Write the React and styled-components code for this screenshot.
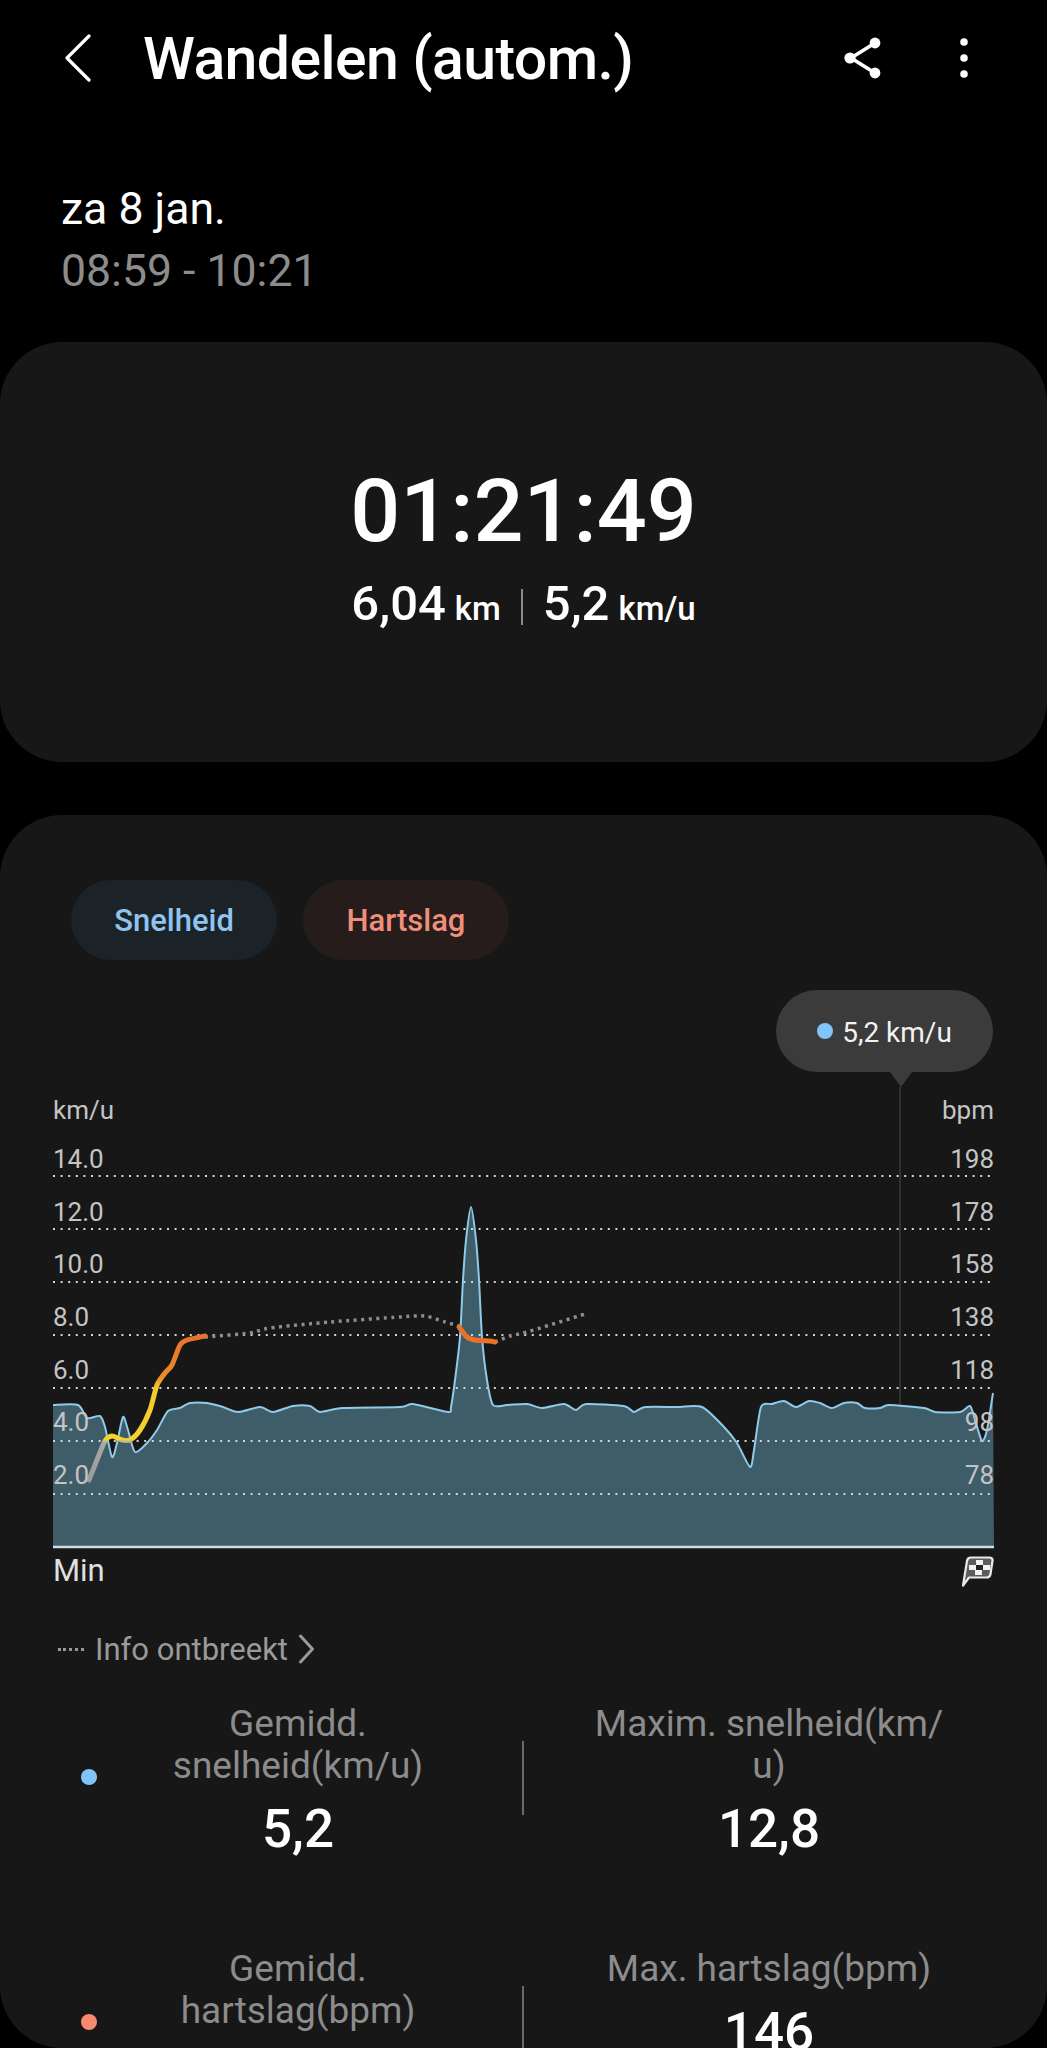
import React from 'react';
import styled, { createGlobalStyle } from 'styled-components';

const speedPts = [
  [53, 1405], [78, 1405], [87, 1418], [100, 1416], [105, 1427], [112, 1457], [117, 1443], [123, 1417], [128, 1430],
  [135, 1452], [147, 1443], [157, 1430], [168, 1411], [180, 1408], [190, 1403], [207, 1403], [223, 1407], [238, 1412],
  [260, 1407], [273, 1412], [293, 1406], [310, 1406], [320, 1412], [343, 1408], [400, 1407], [413, 1404], [448, 1412],
  [451, 1407], [455, 1380], [460, 1337], [463, 1280], [466, 1240], [471, 1207], [476, 1240], [479, 1280], [482, 1337],
  [487, 1380], [493, 1405], [507, 1405], [527, 1404], [542, 1408], [564, 1404], [576, 1410], [586, 1404], [624, 1406],
  [634, 1412], [645, 1407], [677, 1407], [702, 1407], [724, 1427], [737, 1443], [750, 1467], [754, 1450], [761, 1407],
  [772, 1404], [784, 1401], [796, 1407], [809, 1401], [820, 1403], [832, 1408], [844, 1403], [857, 1403], [865, 1408],
  [880, 1408], [889, 1405], [924, 1408], [935, 1412], [960, 1412], [970, 1406], [975, 1420], [982, 1441], [987, 1430],
  [993, 1393],
];

// chart box starts at x 53, y 1096. points are page pixels, smoothed a bit like the real line
const toPath = raw => {
  const pts = raw.map(([x, y]) => [x - 53, y - 1096]);
  let d = `M${pts[0][0]} ${pts[0][1]}`;
  for (let i = 0; i < pts.length - 1; i++) {
    const p0 = pts[i - 1] || pts[i];
    const p1 = pts[i];
    const p2 = pts[i + 1];
    const p3 = pts[i + 2] || p2;
    const c1x = p1[0] + (p2[0] - p0[0]) / 8;
    const c1y = p1[1] + (p2[1] - p0[1]) / 8;
    const c2x = p2[0] - (p3[0] - p1[0]) / 8;
    const c2y = p2[1] - (p3[1] - p1[1]) / 8;
    d += ` C${c1x} ${c1y} ${c2x} ${c2y} ${p2[0]} ${p2[1]}`;
  }
  return d;
};

const speedLine = toPath(speedPts);
const speedArea = `${speedLine} L941 451 L0 451 Z`;

const hrLive1 = toPath([[89, 1480], [97, 1460], [105, 1441], [112, 1436], [122, 1440], [130, 1440], [140, 1430], [150, 1410], [157, 1385], [165, 1373], [172, 1365], [180, 1345], [187, 1340], [205, 1336]]);
const hrGap1 = toPath([[205, 1337], [250, 1333], [270, 1328], [330, 1322], [400, 1317], [425, 1316], [445, 1322], [459, 1326]]);
const hrLive2 = toPath([[459, 1327], [467, 1337], [475, 1340], [490, 1341], [495, 1342]]);
const hrGap2 = toPath([[495, 1342], [510, 1336], [527, 1332], [585, 1314]]);

const leftAxis = ['14.0', '12.0', '10.0', '8.0', '6.0', '4.0', '2.0'];
const rightAxis = ['198', '178', '158', '138', '118', '98', '78'];

const stats = [
  { dot: '#7fc4fa', label: 'Gemidd.\nsnelheid(km/u)', value: '5,2', maxLabel: 'Maxim. snelheid(km/\nu)', maxValue: '12,8' },
  { dot: '#f58a70', label: 'Gemidd.\nhartslag(bpm)', maxLabel: 'Max. hartslag(bpm)', maxValue: '146' },
];

export default function App() {
  return (
    <Page>
      <GlobalStyle />
      <Header>
        <BackBtn>
          <svg width="26" height="48" viewBox="0 0 26 48" fill="none" stroke="#fff" strokeWidth="3.2" strokeLinecap="round" strokeLinejoin="round">
            <path d="M24 2 L2 24 L24 46" />
          </svg>
        </BackBtn>
        <Title>Wandelen (autom.)</Title>
        <HeaderIcons>
          <svg width="38" height="42" viewBox="0 0 38 42" fill="none">
            <path d="M31 6 L7 21 L31 36" stroke="#fff" strokeWidth="3.6" />
            <circle cx="31" cy="6" r="5.4" fill="#fff" />
            <circle cx="6" cy="21" r="5.6" fill="#fff" />
            <circle cx="31" cy="36" r="5.4" fill="#fff" />
          </svg>
          <svg width="10" height="42" viewBox="0 0 10 42" fill="#fff">
            <circle cx="5" cy="5" r="3.8" />
            <circle cx="5" cy="21" r="3.8" />
            <circle cx="5" cy="37" r="3.8" />
          </svg>
        </HeaderIcons>
      </Header>

      <DateBlock>
        <DateText>za 8 jan.</DateText>
        <TimeText>08:59 - 10:21</TimeText>
      </DateBlock>

      <SummaryCard>
        <Duration>01:21:49</Duration>
        <SummaryRow>
          <span>6,04<Unit>km</Unit></span>
          <SummaryDivider />
          <span>5,2<Unit>km/u</Unit></span>
        </SummaryRow>
      </SummaryCard>

      <ChartCard>
        <Pills>
          <Pill $bg="#1b2328" $color="#8ec4ef">Snelheid</Pill>
          <Pill $bg="#251c1b" $color="#ef8f7a">Hartslag</Pill>
        </Pills>

        <Chart>
          <Tooltip>
            <TooltipDot />
            <TooltipText>5,2 km/u</TooltipText>
          </Tooltip>
          <Units>
            <span>km/u</span>
            <span>bpm</span>
          </Units>
          <ChartSvg viewBox="0 0 941 460" width="941" height="460" fill="none">
            <defs>
              <linearGradient id="hrGrad" gradientUnits="userSpaceOnUse" x1="0" y1="384" x2="0" y2="240">
                <stop offset="0" stopColor="#9a9a9a" />
                <stop offset="0.26" stopColor="#a9a9a9" />
                <stop offset="0.28" stopColor="#f3d32c" />
                <stop offset="0.64" stopColor="#f3c92c" />
                <stop offset="0.72" stopColor="#ea8a28" />
                <stop offset="1" stopColor="#e8722a" />
              </linearGradient>
            </defs>
            <path d={speedArea} fill="#3f5c69" />
            <path d="M847 -9 V310" stroke="#3a3a3a" strokeWidth="1.5" />
            {[80, 133, 186, 239, 292, 345, 398].map(y => (
              <path key={y} d={`M0 ${y} H941`} stroke="#d6d6d6" strokeWidth="2" strokeDasharray="2 5.6" />
            ))}
            <path d={speedLine} stroke="#8fcbe8" strokeWidth="2" strokeLinejoin="round" />
            <path d="M0 451 H941" stroke="#cfdde3" strokeWidth="2.5" />
            <path d={hrGap1} stroke="#8e8e8e" strokeWidth="3.5" strokeDasharray="3 4.5" />
            <path d={hrGap2} stroke="#8e8e8e" strokeWidth="3.5" strokeDasharray="3 4.5" />
            <path d={hrLive1} stroke="url(#hrGrad)" strokeWidth="5" strokeLinecap="round" strokeLinejoin="round" />
            <path d={hrLive2} stroke="#e8722a" strokeWidth="5" strokeLinecap="round" strokeLinejoin="round" />
          </ChartSvg>
          <AxisOverlay>
            {leftAxis.map((v, i) => (
              <AxisRow key={v}>
                <span>{v}</span>
                <span>{rightAxis[i]}</span>
              </AxisRow>
            ))}
          </AxisOverlay>
          <ChartFooter>
            <span>Min</span>
            <svg width="33" height="31" viewBox="0 0 33 31" fill="none">
              <path d="M6 5 Q6.5 1.5 10 1.5 H28 Q32 1.5 31.5 5 L29.5 18 Q29 21.5 25.5 21.5 H8 L2 29.5 Z" fill="#5c5c5c" stroke="#e8e8e8" strokeWidth="2.2" strokeLinejoin="round" />
              <path d="M15 4 h7 v5 h-7z M8 9 h7 v5 h-7z M22 9 h7 v5 h-7z M14 14 h7 v5 h-7z" fill="#f2f2f2" />
              <path d="M15 9 h7 v5 h-7z" fill="#222" />
            </svg>
          </ChartFooter>
        </Chart>

        <MissingInfo>
          <MissingDots />
          Info ontbreekt
          <svg width="17" height="30" viewBox="0 0 17 30" fill="none" stroke="#9a9a9a" strokeWidth="3" strokeLinecap="round" strokeLinejoin="round">
            <path d="M2.5 2 L14.5 15 L2.5 28" />
          </svg>
        </MissingInfo>

        <StatList>
          {stats.map(s => (
            <StatRow key={s.label}>
              <StatDot $color={s.dot} />
              <StatCell $left>
                <StatLabel>{s.label}</StatLabel>
                {s.value && <StatValue>{s.value}</StatValue>}
              </StatCell>
              <StatDivider />
              <StatCell>
                <StatLabel>{s.maxLabel}</StatLabel>
                <StatValue>{s.maxValue}</StatValue>
              </StatCell>
            </StatRow>
          ))}
        </StatList>
      </ChartCard>
    </Page>
  );
}

const GlobalStyle = createGlobalStyle`
  html, body {
    margin: 0;
    background: #000;
  }
  * {
    box-sizing: border-box;
  }
`;

const Page = styled.div`
  width: 1047px;
  height: 2048px;
  overflow: hidden;
  background: #000;
  color: #fff;
  font-family: Roboto, 'Liberation Sans', sans-serif;
`;

const Header = styled.div`
  height: 116px;
  display: flex;
  align-items: center;
  padding: 0 78px 0 65px;
`;

const BackBtn = styled.div`
  width: 78px;
  display: flex;
`;

const Title = styled.div`
  flex: 1;
  font-size: 59px;
  font-weight: 500;
  letter-spacing: -0.6px;
`;

const HeaderIcons = styled.div`
  display: flex;
  align-items: center;
  gap: 77px;
`;

const DateBlock = styled.div`
  height: 226px;
  padding: 62px 0 0 61px;
`;

const DateText = styled.div`
  font-size: 44.6px;
  line-height: 62px;
`;

const TimeText = styled.div`
  font-size: 44.6px;
  line-height: 62px;
  color: #8c8c8c;
`;

const SummaryCard = styled.div`
  height: 420px;
  margin-bottom: 53px;
  border-radius: 62px;
  background: #171717;
  display: flex;
  flex-direction: column;
  align-items: center;
  padding-top: 116px;
`;

const Duration = styled.div`
  font-size: 88px;
  font-weight: 500;
  line-height: 106px;
`;

const SummaryRow = styled.div`
  display: flex;
  align-items: center;
  gap: 20px;
  margin-top: 10px;
  font-size: 49px;
  font-weight: 500;
  line-height: 60px;
`;

const Unit = styled.span`
  font-size: 33px;
  margin-left: 9px;
`;

const SummaryDivider = styled.div`
  width: 2px;
  height: 36px;
  background: #8a8a8a;
`;

const ChartCard = styled.div`
  height: 1233px;
  overflow: hidden;
  border-radius: 62px;
  background: #171717;
  padding: 65px 53px 0;
`;

const Pills = styled.div`
  display: flex;
  gap: 26px;
  padding-left: 18px;
`;

const Pill = styled.div`
  width: 206px;
  height: 80px;
  border-radius: 40px;
  background: ${p => p.$bg};
  color: ${p => p.$color};
  display: flex;
  align-items: center;
  justify-content: center;
  font-size: 31px;
  font-weight: 500;
`;

const Chart = styled.div`
  position: relative;
  width: 941px;
  margin-top: 30px;
  padding-top: 105px;
`;

const ChartSvg = styled.svg`
  display: block;
  position: absolute;
  left: 0;
  top: 106px;
  overflow: visible;
`;

const Tooltip = styled.div`
  position: absolute;
  top: 0;
  right: 1px;
  width: 217px;
  height: 82px;
  border-radius: 41px;
  background: #3b3b3b;
  display: flex;
  align-items: center;
  justify-content: center;
  gap: 9px;
  z-index: 2;

  &::after {
    content: '';
    position: absolute;
    left: 114px;
    top: 82px;
    border-left: 11px solid transparent;
    border-right: 11px solid transparent;
    border-top: 15px solid #3b3b3b;
  }
`;

const TooltipDot = styled.span`
  width: 16px;
  height: 16px;
  border-radius: 50%;
  background: #7fc4fa;
`;

const TooltipText = styled.span`
  font-size: 28px;
  line-height: 34px;
  padding-top: 3px;
  color: #f2f2f2;
`;

const Units = styled.div`
  position: relative;
  z-index: 1;
  display: flex;
  justify-content: space-between;
  height: 30px;
  font-size: 26px;
  line-height: 30px;
  color: #c4c4c4;
`;

const AxisOverlay = styled.div`
  position: relative;
  z-index: 1;
  height: 0;
  overflow: visible;
  margin-top: 19px;
`;

const AxisRow = styled.div`
  display: flex;
  justify-content: space-between;
  height: 52.7px;
  font-size: 26px;
  line-height: 30px;
  color: #c4c4c4;
`;

const ChartFooter = styled.div`
  display: flex;
  justify-content: space-between;
  align-items: center;
  padding-top: 409px;
  font-size: 31px;
  line-height: 36px;
  color: #e0e0e0;
`;

const MissingInfo = styled.div`
  display: flex;
  align-items: center;
  height: 40px;
  margin-top: 40px;
  margin-left: 5px;
  font-size: 31px;
  color: #9a9a9a;

  svg {
    margin-left: 10px;
  }
`;

const MissingDots = styled.span`
  width: 26px;
  margin-right: 11px;
  border-top: 3px dotted #9a9a9a;
`;

const StatList = styled.div`
  margin-top: 34px;
`;

const StatRow = styled.div`
  position: relative;
  display: grid;
  grid-template-columns: 469px 2px 1fr;
  height: 245px;
`;

const StatDot = styled.span`
  position: absolute;
  left: 28px;
  top: 66px;
  width: 16px;
  height: 16px;
  border-radius: 50%;
  background: ${p => p.$color};
`;

const StatCell = styled.div`
  text-align: center;
  padding-left: ${p => (p.$left ? '21px' : '20px')};
`;

const StatLabel = styled.div`
  font-size: 37px;
  line-height: 42px;
  color: #8c8c8c;
  white-space: pre-line;
`;

const StatValue = styled.div`
  font-size: 53px;
  font-weight: 500;
  line-height: 62px;
  margin-top: 11px;
`;

const StatDivider = styled.div`
  width: 2px;
  height: 74px;
  margin-top: 38px;
  background: #6a6a6a;
`;
